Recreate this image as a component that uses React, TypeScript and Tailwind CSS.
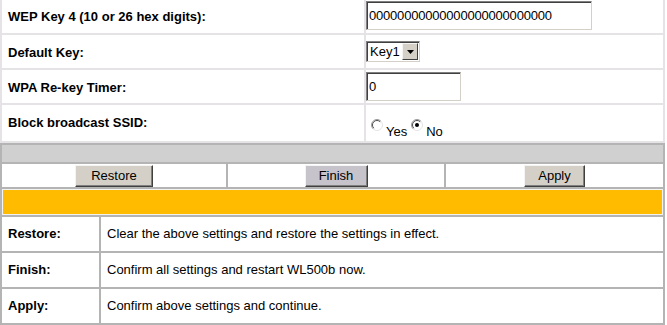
import React from "react";

function Radio({ checked }: { checked?: boolean }) {
  return (
    <svg width="12" height="12" viewBox="0 0 12 12" className="block">
      <circle cx="6" cy="6" r="5.5" fill="#ffffff" />
      <path d="M 2.11 9.89 A 5.5 5.5 0 0 1 9.89 2.11" fill="none" stroke="#9a9a9a" strokeWidth="1" />
      <path d="M 9.89 2.11 A 5.5 5.5 0 0 1 2.11 9.89" fill="none" stroke="#e4e4e4" strokeWidth="1" />
      <path d="M 2.8 9.2 A 4.5 4.5 0 0 1 9.2 2.8" fill="none" stroke="#505050" strokeWidth="1" />
      {checked && <circle cx="6" cy="6" r="2" fill="#000000" />}
    </svg>
  );
}

function Btn({ label, w, bg }: { label: string; w: string; bg: string }) {
  return (
    <div
      className={`${w} ${bg} h-[22px] flex items-center justify-center text-[13px] text-black border border-t-[#f4f4f4] border-l-[#f4f4f4] border-r-[#404040] border-b-[#404040] shadow-[inset_-1px_-1px_#808080]`}
    >
      {label}
    </div>
  );
}

export default function App() {
  return (
    <div className="w-[667px] h-[325px] bg-white overflow-hidden font-['Liberation_Sans',Arial,sans-serif] text-black">
      {/* top settings table */}
      <div className="w-[665px] bg-[#e6e3e6] px-[2px] pb-[2px] flex flex-col gap-[2px]">
        <div className="grid grid-cols-[362px_297px] gap-[2px] h-[33px]">
          <div className="bg-white flex items-center pl-[6px] text-[13px] font-bold">
            WEP Key 4 (10 or 26 hex digits):
          </div>
          <div className="bg-white flex items-start pt-[1px]">
            <div className="w-[226px] h-[29px] bg-white border border-t-[#808080] border-l-[#808080] border-r-[#d4d0c8] border-b-[#d4d0c8] shadow-[inset_1px_1px_#404040] flex items-center pl-[2px] text-[13px] tracking-[-0.2px]">
              00000000000000000000000000
            </div>
          </div>
        </div>
        <div className="grid grid-cols-[362px_297px] gap-[2px] h-[33px]">
          <div className="bg-white flex items-center pl-[6px] pt-[2px] text-[13px] font-bold">Default Key:</div>
          <div className="bg-white flex items-center">
            <div className="w-[54px] h-[21px] bg-white border border-t-[#808080] border-l-[#808080] border-r-[#d4d0c8] border-b-[#d4d0c8] shadow-[inset_1px_1px_#404040] flex items-center justify-between pl-[3px] pr-[1px] text-[13px]">
              <span>Key1</span>
              <div className="w-[16px] h-[17px] bg-[#d4d0c8] border border-t-[#f4f4f4] border-l-[#f4f4f4] border-r-[#404040] border-b-[#404040] flex items-center justify-center">
                <svg width="7" height="4" viewBox="0 0 7 4" className="block">
                  <path d="M0 0 H7 L3.5 4 Z" fill="#000" />
                </svg>
              </div>
            </div>
          </div>
        </div>
        <div className="grid grid-cols-[362px_297px] gap-[2px] h-[33px]">
          <div className="bg-white flex items-center pl-[6px] pt-[2px] text-[13px] font-bold">WPA Re-key Timer:</div>
          <div className="bg-white flex items-start pt-[2px]">
            <div className="w-[95px] h-[29px] bg-white border border-t-[#808080] border-l-[#808080] border-r-[#d4d0c8] border-b-[#d4d0c8] shadow-[inset_1px_1px_#404040] flex items-center pl-[2px] text-[13px]">
              0
            </div>
          </div>
        </div>
        <div className="grid grid-cols-[362px_297px] gap-[2px] h-[36px]">
          <div className="bg-white flex items-center pl-[6px] text-[13px] font-bold">Block broadcast SSID:</div>
          <div className="bg-white flex items-start pt-[14px] pl-[5px] text-[13px] leading-none">
            <div><Radio /></div>
            <span className="ml-[3px] mt-[6px]">Yes</span>
            <div className="ml-[4px]"><Radio checked /></div>
            <span className="ml-[3px] mt-[6px]">No</span>
          </div>
        </div>
      </div>

      {/* bottom section */}
      <div className="w-[665px] bg-[#b4b4b4] p-[2px] flex flex-col gap-[2px]">
        <div className="h-[17px] bg-[#d0d0d0]" />
        <div className="grid grid-cols-[224px_216px_217px] gap-[2px] h-[23px]">
          <div className="bg-white flex justify-center pt-[1px]">
            <Btn label="Restore" w="w-[78px]" bg="bg-[#d4d0c8]" />
          </div>
          <div className="bg-white flex justify-center pt-[1px]">
            <Btn label="Finish" w="w-[63px]" bg="bg-[#c6c3cb]" />
          </div>
          <div className="bg-white flex justify-center pt-[1px]">
            <Btn label="Apply" w="w-[61px]" bg="bg-[#d4d0c8]" />
          </div>
        </div>
        <div className="h-[26px] bg-[#ffbb00] border border-[#f2f2f2]" />
        <div className="grid grid-cols-[97px_1fr] gap-[2px] h-[34px]">
          <div className="bg-white flex items-center pl-[6px] text-[13px] font-bold">Restore:</div>
          <div className="bg-white flex items-center pl-[6px] text-[13px]">
            Clear the above settings and restore the settings in effect.
          </div>
        </div>
        <div className="grid grid-cols-[97px_1fr] gap-[2px] h-[34px]">
          <div className="bg-white flex items-center pl-[6px] text-[13px] font-bold">Finish:</div>
          <div className="bg-white flex items-center pl-[6px] text-[13px]">
            Confirm all settings and restart WL500b now.
          </div>
        </div>
        <div className="grid grid-cols-[97px_1fr] gap-[2px] h-[34px]">
          <div className="bg-white flex items-center pl-[6px] text-[13px] font-bold">Apply:</div>
          <div className="bg-white flex items-center pl-[6px] text-[13px]">
            Confirm above settings and continue.
          </div>
        </div>
      </div>
    </div>
  );
}
